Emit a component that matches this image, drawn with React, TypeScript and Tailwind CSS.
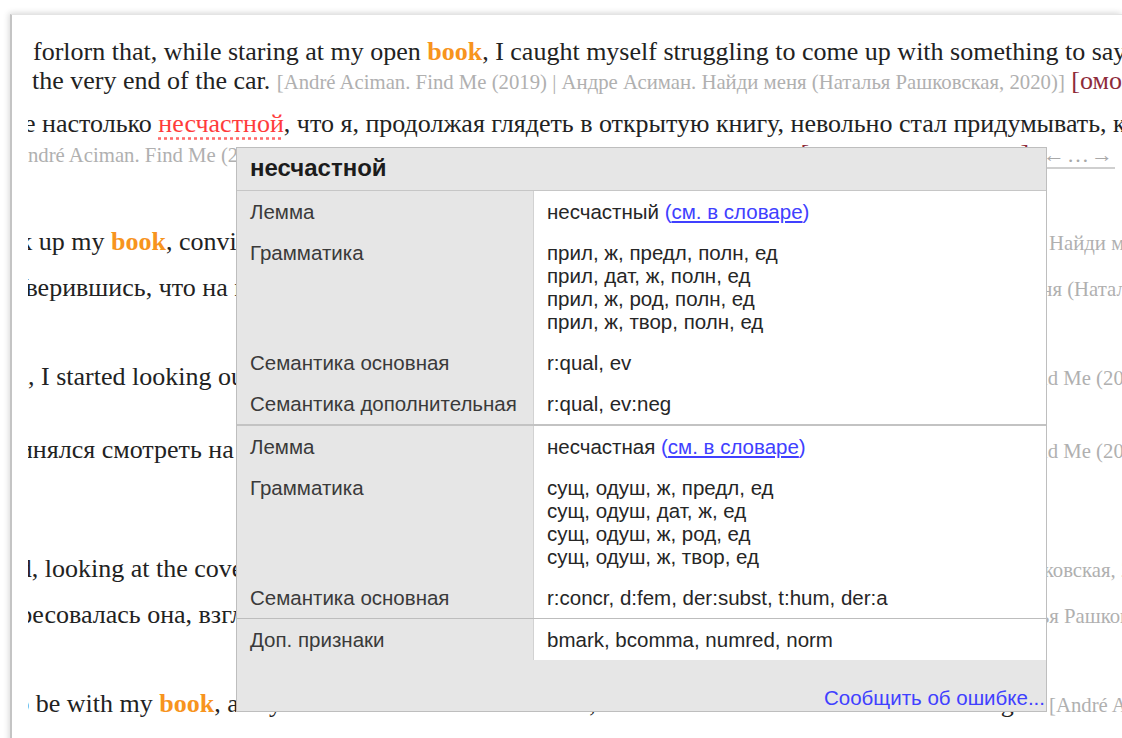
import type { ReactNode } from "react";

const SERIF = "font-['Liberation_Serif','Times_New_Roman',serif]";
const SANS = "font-['Liberation_Sans',Arial,sans-serif]";

const CITATION =
  "[André Aciman. Find Me (2019) | Андре Асиман. Найди меня (Наталья Рашковская, 2020)]";

function Book() {
  return <b className="font-bold text-[#f7941e]">book</b>;
}

function Cite({ children }: { children: ReactNode }) {
  return <span className="text-[20.75px] leading-none text-[#b0b0b0]">{children}</span>;
}

function Homonymy() {
  return (
    <>
      <span className="text-[#8e2a3a]">[омонимия не снята]</span>
      <span className="ml-[14px] border-b-2 border-[#cfcfcf] text-[22px] leading-none tracking-[2px] text-[#a8a8a8]">
        ←…→
      </span>
    </>
  );
}

// a sentence row whose citation tail peeks out past the popup's right edge
function Row({
  className,
  tail,
  children,
}: {
  className: string;
  tail: ReactNode;
  children: ReactNode;
}) {
  return (
    <div
      className={`grid h-[29px] grid-cols-[1021px_minmax(0,1fr)] whitespace-nowrap ${className}`}
    >
      <div className="overflow-hidden">{children}</div>
      <div>{tail}</div>
    </div>
  );
}

type Entry = { label: string; value: ReactNode };

function DictLink() {
  return (
    <a href="#" className="text-[#4040ff]">
      (<span className="underline">см. в словаре</span>)
    </a>
  );
}

function Section({ rows, className }: { rows: Entry[]; className: string }) {
  return (
    <div className={`grid grid-cols-[296px_1fr] ${className}`}>
      {rows.map((r) => (
        <div key={r.label} className="contents">
          <div className="px-[13px] py-[9px] text-[#3a3a3a]">{r.label}</div>
          <div className="border-l border-[#d2d2d2] bg-white px-[13px] py-[9px] text-[#262626]">
            {r.value}
          </div>
        </div>
      ))}
    </div>
  );
}

function Lines({ items }: { items: string[] }) {
  return (
    <>
      {items.map((l) => (
        <div key={l}>{l}</div>
      ))}
    </>
  );
}

const adjective: Entry[] = [
  {
    label: "Лемма",
    value: (
      <>
        несчастный <DictLink />
      </>
    ),
  },
  {
    label: "Грамматика",
    value: (
      <Lines
        items={[
          "прил, ж, предл, полн, ед",
          "прил, дат, ж, полн, ед",
          "прил, ж, род, полн, ед",
          "прил, ж, твор, полн, ед",
        ]}
      />
    ),
  },
  { label: "Семантика основная", value: "r:qual, ev" },
  { label: "Семантика дополнительная", value: "r:qual, ev:neg" },
];

const noun: Entry[] = [
  {
    label: "Лемма",
    value: (
      <>
        несчастная <DictLink />
      </>
    ),
  },
  {
    label: "Грамматика",
    value: (
      <Lines
        items={[
          "сущ, одуш, ж, предл, ед",
          "сущ, одуш, дат, ж, ед",
          "сущ, одуш, ж, род, ед",
          "сущ, одуш, ж, твор, ед",
        ]}
      />
    ),
  },
  { label: "Семантика основная", value: "r:concr, d:fem, der:subst, t:hum, der:a" },
];

function WordPopup() {
  return (
    <div
      className={`absolute left-[236px] top-[147px] flex h-[565px] w-[811px] flex-col border border-[#bebebe] bg-[#e6e6e6] text-[20.5px] leading-[23px] ${SANS}`}
    >
      <div className="flex h-[43px] shrink-0 items-center border-b border-[#c6c6c6] px-[13px] pb-[3px] text-[24px] font-bold text-[#1c1c1c]">
        несчастной
      </div>
      <Section rows={adjective} className="" />
      <Section rows={noun} className="border-t-2 border-[#c3c3c3]" />
      <Section
        rows={[{ label: "Доп. признаки", value: "bmark, bcomma, numred, norm" }]}
        className="border-t border-[#bdbdbd]"
      />
      <div className="flex flex-1 items-end justify-end pb-[2px] pr-[1px]">
        <a href="#" className="text-[#4040ff]">
          Сообщить об ошибке...
        </a>
      </div>
    </div>
  );
}

export default function App() {
  return (
    <div className="relative h-[738px] w-full overflow-hidden bg-white">
      <div className="ml-[10px] mt-[14px] h-[760px] border-l-2 border-t border-l-[#c4c4c4] border-t-[#e4e4e4] bg-white pl-[16px] pt-[22px] shadow-[-1px_-1px_6px_rgba(0,0,0,0.16)]">
        <div className={`overflow-hidden text-[26px] leading-[29px] text-[#222] ${SERIF}`}>
          <div className="h-[29px] whitespace-nowrap pl-[5px]">
            forlorn that, while staring at my open <Book />, I caught myself struggling to come
            up with something to say to him
          </div>
          <div className="h-[29px] whitespace-nowrap pl-[4px]">
            the very end of the car. <Cite>{CITATION}</Cite> <Homonymy />
          </div>
          <div className="mt-[14px] h-[29px] whitespace-nowrap">
            <span className="-ml-[4px]">е настолько </span>
            <span className="text-[#ff3b3b] underline decoration-[#ff6b6b] decoration-dotted underline-offset-[5px]">
              несчастной
            </span>
            , что я, продолжая глядеть в открытую книгу, невольно стал придумывать, как
          </div>
          <div className="mt-[1px] h-[29px] whitespace-nowrap">
            <span className="-ml-[22px]">
              <Cite>{CITATION}</Cite> <Homonymy />
            </span>
          </div>

          <Row className="mt-[59px]" tail={<Cite>Найди меня (Наталья Рашковская, 2020)]</Cite>}>
            <span className="-ml-[42px]">
              took up my <Book />, convinced that she had already forgotten I was sitting there.
            </span>
          </Row>
          <Row
            className="mt-[17px]"
            tail={
              <span className="-ml-[30px]">
                <Cite>меня (Наталья Рашковская, 2020)]</Cite>
              </span>
            }
          >
            <span className="-ml-[18px]">
              Уверившись, что на меня никто не смотрит, я снова взялся за свою книгу.
            </span>
          </Row>

          <Row
            className="mt-[60px]"
            tail={
              <span className="-ml-[29px]">
                <Cite>Find Me (2019) | Андре Асиман. Найди меня (Наталья Рашковская, 2020)]</Cite>
              </span>
            }
          >
            <span className="-ml-[52px]">
              book, I started looking out the window at the vineyards passing by.
            </span>
          </Row>
          <Row
            className="mt-[44px]"
            tail={
              <span className="-ml-[29px]">
                <Cite>Find Me (2019) | Андре Асиман. Найди меня (Наталья Рашковская, 2020)]</Cite>
              </span>
            }
          >
            <span className="-ml-[36px]">
              принялся смотреть на проплывающие за окном виноградники и холмы.
            </span>
          </Row>

          <Row
            className="mt-[90px]"
            tail={
              <span className="-ml-[42px]">
                <Cite>Рашковская, 2020)]</Cite>
              </span>
            }
          >
            <span className="-ml-[41px]">
              And, looking at the cover of my book, she asked what I was reading.
            </span>
          </Row>
          <Row
            className="mt-[17px]"
            tail={
              <span className="-ml-[62px]">
                <Cite>Наталья Рашковская, 2020)]</Cite>
              </span>
            }
          >
            <span className="-ml-[84px]">
              Заинтересовалась она, взглянув на обложку моей книги.
            </span>
          </Row>

          <Row className="mt-[60px]" tail={<Cite>{CITATION}</Cite>}>
            <span className="-ml-[19px]">
              to be with my <Book />, away from a man I won't ever love, but I would much rather
              talk to a stranger.
            </span>
          </Row>
        </div>
      </div>
      <WordPopup />
    </div>
  );
}
